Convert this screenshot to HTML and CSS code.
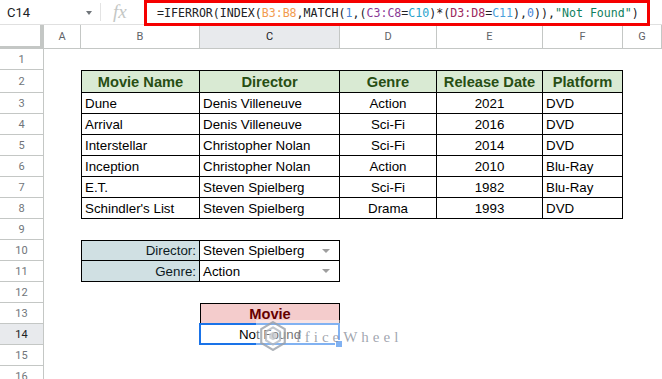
FILE: index.html
```html
<!DOCTYPE html>
<html>
<head>
<meta charset="utf-8">
<link rel="stylesheet" href="styles.css">
</head>
<body>
<div class="app">
  <div class="fbar">
    <div class="namebox"><span class="ref">C14</span><span class="caret"></span></div>
    <div class="fx">fx</div>
    <div class="formula"><span>=IFERROR(INDEX(</span><span class="f-o">B3:B8</span><span>,MATCH(</span><span class="f-n">1</span><span>,(</span><span class="f-p">C3:C8</span><span>=</span><span class="f-t">C10</span><span>)*(</span><span class="f-r">D3:D8</span><span>=</span><span class="f-b">C11</span><span>),</span><span class="f-n">0</span><span>)),</span><span class="f-s">"Not Found"</span><span>)</span></div>
  </div>
  <div class="sheet">
    <div class="corner"></div>
    <div class="ch">A</div><div class="ch">B</div><div class="ch sel">C</div><div class="ch">D</div><div class="ch">E</div><div class="ch">F</div><div class="ch">G</div>

    <div class="rh">1</div><div></div><div></div><div></div><div></div><div></div><div></div><div></div>

    <div class="rh">2</div><div></div>
    <div class="t top left th">Movie Name</div><div class="t top th">Director</div><div class="t top th">Genre</div><div class="t top th">Release Date</div><div class="t top th">Platform</div><div></div>

    <div class="rh">3</div><div></div>
    <div class="t left">Dune</div><div class="t">Denis Villeneuve</div><div class="t ctr">Action</div><div class="t ctr">2021</div><div class="t">DVD</div><div></div>

    <div class="rh">4</div><div></div>
    <div class="t left">Arrival</div><div class="t">Denis Villeneuve</div><div class="t ctr">Sci-Fi</div><div class="t ctr">2016</div><div class="t">DVD</div><div></div>

    <div class="rh">5</div><div></div>
    <div class="t left">Interstellar</div><div class="t">Christopher Nolan</div><div class="t ctr">Sci-Fi</div><div class="t ctr">2014</div><div class="t">DVD</div><div></div>

    <div class="rh">6</div><div></div>
    <div class="t left">Inception</div><div class="t">Christopher Nolan</div><div class="t ctr">Action</div><div class="t ctr">2010</div><div class="t">Blu-Ray</div><div></div>

    <div class="rh">7</div><div></div>
    <div class="t left">E.T.</div><div class="t">Steven Spielberg</div><div class="t ctr">Sci-Fi</div><div class="t ctr">1982</div><div class="t">Blu-Ray</div><div></div>

    <div class="rh">8</div><div></div>
    <div class="t left">Schindler's List</div><div class="t">Steven Spielberg</div><div class="t ctr">Drama</div><div class="t ctr">1993</div><div class="t">DVD</div><div></div>

    <div class="rh">9</div><div></div><div></div><div></div><div></div><div></div><div></div><div></div>

    <div class="rh">10</div><div></div>
    <div class="t top left lbl">Director:</div><div class="t top dd">Steven Spielberg<span class="ddarrow"></span></div><div></div><div></div><div></div><div></div>

    <div class="rh">11</div><div></div>
    <div class="t left lbl">Genre:</div><div class="t dd">Action<span class="ddarrow"></span></div><div></div><div></div><div></div><div></div>

    <div class="rh">12</div><div></div><div></div><div></div><div></div><div></div><div></div><div></div>

    <div class="rh">13</div><div></div><div></div>
    <div class="t top left mh">Movie</div><div></div><div></div><div></div><div></div>

    <div class="rh rsel">14</div><div></div><div></div>
    <div class="t left ctr active">Not Found</div><div></div><div></div><div></div><div></div>

    <div class="rh">15</div><div></div><div></div><div></div><div></div><div></div><div></div><div></div>

    <div class="rh">16</div><div></div><div></div><div></div><div></div><div></div><div></div><div></div>
  </div>
  <div class="watermark">
    <svg class="wm-logo" width="30" height="30" viewBox="0 0 26 28">
      <polygon points="13,1 24,7.5 24,20.5 13,27 2,20.5 2,7.5" fill="none" stroke="#9aa0a8" stroke-width="2"/>
      <polygon points="13,6 19.5,9.8 19.5,18.2 13,22 6.5,18.2 6.5,9.8" fill="none" stroke="#b4b9c0" stroke-width="2"/>
      <path d="M13 10 L16.5 12 L16.5 16 L13 18 L9.5 16 L9.5 12 Z" fill="#c5c9ce"/>
    </svg>
    <span class="wm-text">fficeWheel</span>
  </div>
</div>
</body>
</html>
```

FILE: styles.css
```css
* { box-sizing: border-box; }
html, body { margin: 0; padding: 0; background: #fff; }
body { width: 662px; height: 379px; overflow: hidden; font-family: "Liberation Sans", Arial, sans-serif; }
.app { position: relative; width: 662px; height: 379px; overflow: hidden; }

.fbar {
  display: flex;
  align-items: stretch;
  height: 25px;
  background: #fff;
  border-bottom: 1px solid #e0e0e0;
}
.namebox {
  width: 101px;
  display: flex;
  align-items: center;
  justify-content: space-between;
  padding: 0 8px 0 7px;
  border-right: 1px solid #e3e3e3;
  margin: 3px 0;
}
.ref { font-family: Roboto, "Liberation Sans", sans-serif; font-size: 13px; color: #202124; }
.caret {
  width: 0; height: 0;
  border-left: 3.5px solid transparent;
  border-right: 3.5px solid transparent;
  border-top: 4px solid #70757a;
  margin-top: 2px;
}
.fx {
  width: 43px;
  display: flex;
  align-items: center;
  padding-left: 12px;
  font-family: "Liberation Serif", serif;
  font-style: italic;
  font-size: 19px;
  color: #c4c7c5;
}
.formula {
  width: 506px;
  height: 26px;
  border: 3px solid #f50000;
  display: flex;
  align-items: center;
  padding-left: 10px;
  font-family: "DejaVu Sans Mono", "Liberation Mono", monospace;
  font-size: 11.6px;
  color: #202124;
  white-space: nowrap;
  position: relative;
  z-index: 2;
}
.f-o { color: #f29b4f; }
.f-p { color: #8a3a96; }
.f-t { color: #2aa3cc; }
.f-r { color: #9c2a5e; }
.f-b { color: #4b9fdc; }
.f-n { color: #4a86d6; }
.f-s { color: #0f8060; }

.sheet {
  display: grid;
  grid-template-columns: 44px 37px 119px 140px 97px 106px 80px 39px;
  grid-template-rows: 24px 21px 23px repeat(14, 21px);
  font-size: 13.33px;
  color: #000;
}
.sheet > div { min-width: 0; }
.corner {
  border-right: 4px solid #c4c7c5;
  border-bottom: 3px solid #c4c7c5;
}
.ch {
  display: flex;
  align-items: center;
  justify-content: center;
  font-family: Roboto, "Liberation Sans", sans-serif;
  font-size: 11px;
  color: #5f6368;
  border-right: 1px solid #c4c7c5;
  border-bottom: 1px solid #c4c7c5;
}
.ch.sel { background: #e8eaed; color: #202124; }
.rh {
  display: flex;
  align-items: center;
  justify-content: center;
  font-family: Roboto, "Liberation Sans", sans-serif;
  font-size: 11px;
  color: #70757a;
  border-right: 1px solid #c4c7c5;
  border-bottom: 1px solid #c4c7c5;
}
.rh.rsel { background: #e8eaed; color: #202124; }

.t {
  display: flex;
  align-items: center;
  padding: 0 3px;
  border-right: 1px solid #000;
  border-bottom: 1px solid #000;
  white-space: nowrap;
  overflow: hidden;
  position: relative;
}
.t.top { border-top: 1px solid #000; }
.t.left { border-left: 1px solid #000; }
.t.ctr { justify-content: center; }
.th {
  justify-content: center;
  background: #d9ead3;
  color: #274e13;
  font-weight: bold;
  font-size: 14.67px;
}
.lbl {
  justify-content: flex-end;
  background: #d0e0e3;
  color: #0c1a1e;
}
.dd { justify-content: space-between; }
.ddarrow {
  width: 0; height: 0;
  border-left: 4px solid transparent;
  border-right: 4px solid transparent;
  border-top: 4px solid #9e9e9e;
  margin-right: 6px;
}
.mh {
  justify-content: center;
  background: #f4cccc;
  color: #660000;
  font-weight: bold;
  font-size: 14.67px;
}
.active { overflow: visible; }
.active::after {
  content: "";
  position: absolute;
  left: -2px; top: -1px; right: -1px; bottom: -1px;
  border: 2px solid #1a73e8;
  pointer-events: none;
}
.active::before {
  content: "";
  position: absolute;
  right: -4px; bottom: -4px;
  width: 6px; height: 6px;
  background: #1a73e8;
  border: 1px solid #fff;
  z-index: 2;
}

.watermark {
  position: absolute;
  left: 256px;
  top: 320px;
  width: 150px;
  height: 32px;
  background: rgba(255,255,255,0.45);
  display: flex;
  align-items: center;
  gap: 8px;
  z-index: 3;
}
.wm-logo { opacity: 0.8; margin-left: 2px; }
.wm-text {
  font-family: "Liberation Serif", serif;
  font-size: 15px;
  letter-spacing: 4px;
  color: rgba(120,126,140,0.7);
  margin-top: 3px;
}
```
